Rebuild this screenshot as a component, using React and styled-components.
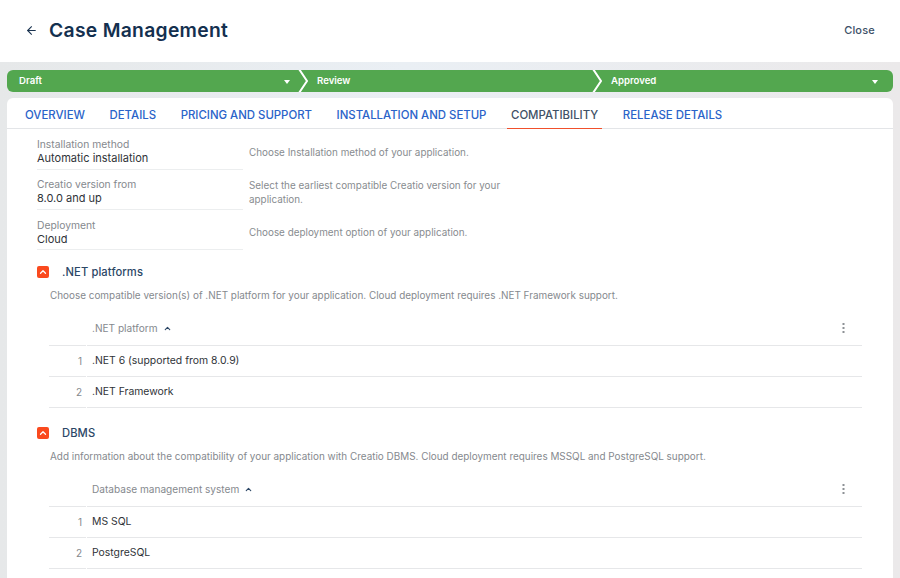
import React from "react"
import styled, { createGlobalStyle } from "styled-components"
import { ArrowLeft, ChevronUp } from "lucide-react"

const GlobalStyle = createGlobalStyle`
  html, body {
    margin: 0;
    padding: 0;
    height: 578px;
    overflow: hidden;
    background: #e8eaec;
    font-family: Inter, "Open Sans", "Liberation Sans", sans-serif;
  }
`

const Page = styled.div`
  width: 900px;
  height: 578px;
  overflow: hidden;
  background: linear-gradient(90deg, #e6e8e9 0%, #eaeff4 45%, #ebe9ea 100%);
`

const Header = styled.header`
  display: flex;
  align-items: center;
  height: 62px;
  box-sizing: border-box;
  padding: 0 25px 2px 25px;
  background: #fff;
`

const BackButton = styled.span`
  display: flex;
  width: 24px;
  color: #1a3350;
`

const Title = styled.h1`
  flex: 1;
  margin: 0;
  font-size: 19.3px;
  font-weight: 600;
  letter-spacing: 0.3px;
  color: #14304f;
`

const CloseLink = styled.span`
  font-size: 11px;
  font-weight: 500;
  letter-spacing: 0.2px;
  color: #3c5068;
`

const StageBar = styled.div`
  display: flex;
  height: 22px;
  margin: 8px 7px 6px;
  border-radius: 6px;
  overflow: hidden;
  background: #53a74f;
`

const Stage = styled.div`
  position: relative;
  display: flex;
  align-items: center;
  justify-content: space-between;
  box-sizing: border-box;
  width: ${p => p.$width}px;
  padding: 0 ${p => p.$right}px 2px ${p => p.$left}px;
  font-size: 9.6px;
  font-weight: 600;
  color: #fff;
`

const Caret = styled.span`
  width: 0;
  height: 0;
  margin-top: 3px;
  border-left: 3.5px solid transparent;
  border-right: 3.5px solid transparent;
  border-top: 4px solid #fff;
`

const Chevron = styled.svg`
  position: absolute;
  top: 0;
  right: -6px;
  width: 11px;
  height: 22px;
  z-index: 1;
`

const Card = styled.main`
  height: 480px;
  margin: 0 7px;
  border-radius: 6px 6px 0 0;
  background: #fff;
  overflow: hidden;
`

const Tabs = styled.nav`
  display: flex;
  gap: 24.6px;
  height: 31px;
  box-sizing: border-box;
  padding-left: 18px;
  border-bottom: 1px solid #e3e5e8;
`

const Tab = styled.span`
  box-sizing: border-box;
  height: 31px;
  padding: 10px ${p => (p.$active ? 4 : 0)}px 0;
  margin: 0 ${p => (p.$active ? -4 : 0)}px;
  font-size: 11.4px;
  font-weight: 500;
  white-space: nowrap;
  color: ${p => (p.$active ? "#3f5166" : "#2a63c9")};
  border-bottom: 1.5px solid ${p => (p.$active ? "#f0502c" : "transparent")};
`

const Fields = styled.div`
  padding-top: 1px;
`

const FormRow = styled.div`
  display: grid;
  grid-template-columns: 206px 260px;
  column-gap: 6px;
  align-items: center;
  margin-left: 30px;
  height: 40px;
`

const Field = styled.div`
  box-sizing: border-box;
  height: 40px;
  padding-top: ${p => p.$top}px;
  border-bottom: 1px solid #eceeef;
`

const FieldLabel = styled.div`
  font-size: 10.3px;
  line-height: 13px;
  color: #85898e;
`

const FieldValue = styled.div`
  font-size: 11px;
  line-height: 15px;
  color: #2f3338;
`

const Hint = styled.div`
  padding-top: 4px;
  font-size: 9.9px;
  line-height: 14px;
  color: #888c90;
`

const Section = styled.section`
  padding-top: ${p => p.$top}px;
`

const SectionHead = styled.div`
  display: flex;
  align-items: center;
  height: 14px;
  margin-left: 30px;
`

const Toggle = styled.span`
  display: flex;
  align-items: center;
  justify-content: center;
  width: 12px;
  height: 12px;
  margin-right: 13px;
  border-radius: 2px;
  background: #fa4a1e;
  color: #fff;
`

const SectionTitle = styled.h2`
  margin: 0;
  font-size: 11.2px;
  font-weight: 500;
  letter-spacing: 0.1px;
  color: #2c4766;
`

const SectionText = styled.p`
  margin: 9px 0 0 43px;
  font-size: 9.92px;
  line-height: 14px;
  color: #85898e;
`

const Table = styled.div`
  display: grid;
  grid-template-columns: 37px 775px;
  column-gap: 1px;
  margin: 9px 0 0 42px;
`

const HeadSpacer = styled.div`
  height: 34px;
  border-bottom: 1px solid #e6e7e9;
`

const HeadCell = styled.div`
  display: flex;
  align-items: center;
  height: 35px;
  box-sizing: border-box;
  padding: 0 17px 0 5px;
  border-bottom: 1px solid #e6e7e9;
  font-size: 10.1px;
  color: #85898e;
`

const SortIcon = styled.span`
  display: flex;
  margin-left: 5px;
  color: #2c4766;
`

const MenuDots = styled.svg`
  margin-left: auto;
  width: 3px;
  height: 11px;
`

const NumCell = styled.div`
  height: 31px;
  box-sizing: border-box;
  padding: 8px 4px 0 0;
  text-align: right;
  font-size: 10px;
  line-height: 14px;
  color: #85898e;
  border-bottom: 1px solid #e6e7e9;
`

const ValueCell = styled.div`
  height: 31px;
  box-sizing: border-box;
  padding: 8px 0 0 5px;
  font-size: 10.4px;
  line-height: 14px;
  color: #2f3338;
  border-bottom: 1px solid #e6e7e9;
`

const fields = [
  {
    label: "Installation method",
    value: "Automatic installation",
    hint: "Choose Installation method of your application.",
    top: 8,
  },
  {
    label: "Creatio version from",
    value: "8.0.0 and up",
    hint: "Select the earliest compatible Creatio version for your application.",
    top: 8,
  },
  {
    label: "Deployment",
    value: "Cloud",
    hint: "Choose deployment option of your application.",
    top: 9,
  },
]

const sections = [
  {
    title: ".NET platforms",
    text: "Choose compatible version(s) of .NET platform for your application. Cloud deployment requires .NET Framework support.",
    column: ".NET platform",
    rows: [".NET 6 (supported from 8.0.9)", ".NET Framework"],
    top: 15,
  },
  {
    title: "DBMS",
    text: "Add information about the compatibility of your application with Creatio DBMS. Cloud deployment requires MSSQL and PostgreSQL support.",
    column: "Database management system",
    rows: ["MS SQL", "PostgreSQL"],
    top: 18,
  },
]

const tabs = [
  "OVERVIEW",
  "DETAILS",
  "PRICING AND SUPPORT",
  "INSTALLATION AND SETUP",
  "COMPATIBILITY",
  "RELEASE DETAILS",
]

const StageChevron = () => (
  <Chevron viewBox="0 0 11 22">
    <path d="M1 -1 L9 11 L1 23" fill="none" stroke="#fff" strokeWidth="2" />
  </Chevron>
)

export default function App() {
  return (
    <Page>
      <GlobalStyle />
      <Header>
        <BackButton>
          <ArrowLeft size={13} strokeWidth={2} />
        </BackButton>
        <Title>Case Management</Title>
        <CloseLink>Close</CloseLink>
      </Header>

      <StageBar>
        <Stage $width={296} $left={12} $right={13}>
          Draft <Caret />
          <StageChevron />
        </Stage>
        <Stage $width={294} $left={14} $right={0}>
          Review
          <StageChevron />
        </Stage>
        <Stage $width={296} $left={14} $right={15}>
          Approved <Caret />
        </Stage>
      </StageBar>

      <Card>
        <Tabs>
          {tabs.map(tab => (
            <Tab key={tab} $active={tab === "COMPATIBILITY"}>
              {tab}
            </Tab>
          ))}
        </Tabs>

        <Fields>
          {fields.map(field => (
            <FormRow key={field.label}>
              <Field $top={field.top}>
                <FieldLabel>{field.label}</FieldLabel>
                <FieldValue>{field.value}</FieldValue>
              </Field>
              <Hint>{field.hint}</Hint>
            </FormRow>
          ))}
        </Fields>

        {sections.map(section => (
          <Section key={section.title} $top={section.top}>
            <SectionHead>
              <Toggle>
                <ChevronUp size={10} strokeWidth={3} />
              </Toggle>
              <SectionTitle>{section.title}</SectionTitle>
            </SectionHead>
            <SectionText>{section.text}</SectionText>
            <Table>
              <HeadSpacer />
              <HeadCell>
                {section.column}
                <SortIcon>
                  <ChevronUp size={9} strokeWidth={3} />
                </SortIcon>
                <MenuDots viewBox="0 0 3 11">
                  <rect x="0.5" y="0" width="2" height="2" fill="#8d9196" />
                  <rect x="0.5" y="4" width="2" height="2" fill="#8d9196" />
                  <rect x="0.5" y="8" width="2" height="2" fill="#8d9196" />
                </MenuDots>
              </HeadCell>
              {section.rows.map((row, index) => (
                <React.Fragment key={row}>
                  <NumCell>{index + 1}</NumCell>
                  <ValueCell>{row}</ValueCell>
                </React.Fragment>
              ))}
            </Table>
          </Section>
        ))}
      </Card>
    </Page>
  )
}
